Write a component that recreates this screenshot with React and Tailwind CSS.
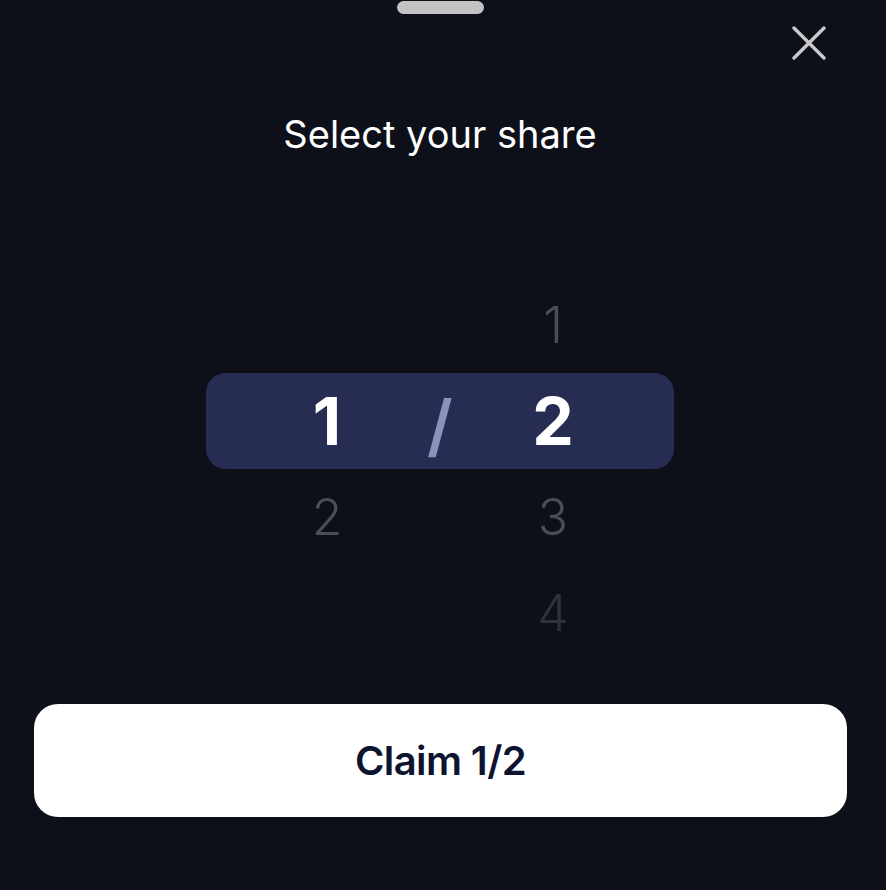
import { useState } from "react";

const font = { fontFamily: "Inter, 'Noto Sans', sans-serif" };

function PickerRow({ left, right, active, tone }) {
  const dim = tone === "faint" ? "text-[#2f323a]" : "text-[#4b4e57]";
  return (
    <div
      className={`h-[96px] w-[468px] mx-auto pl-[61px] grid grid-cols-[120px_102px_120px] gap-[2px] items-center ${
        active ? "bg-[#272d52] rounded-[20px]" : ""
      }`}
    >
      <div
        className={`text-center leading-none ${
          active ? "text-white text-[66px] font-bold" : `${dim} text-[50px] font-light`
        }`}
      >
        {left}
      </div>
      <div className="text-center leading-none text-[#8a91bb] text-[68px] font-semibold mt-[8px]">
        {active ? "/" : ""}
      </div>
      <div
        className={`text-center leading-none ${
          active ? "text-white text-[66px] font-bold" : `${dim} text-[50px] font-light`
        }`}
      >
        {right}
      </div>
    </div>
  );
}

export default function App() {
  const [share] = useState({ part: 1, total: 2 });

  return (
    <div style={font} className="w-full h-[890px] bg-[#0d1018] flex flex-col overflow-hidden pr-[6px]">
      <div className="mt-[1px] mx-auto w-[87px] h-[13px] rounded-full bg-[#c3c3c3]" />

      <div className="mt-[12px] h-[34px] flex justify-end pr-[54px]">
        <button type="button" className="w-[34px] h-[34px]">
          <svg viewBox="0 0 34 34" width="34" height="34">
            <path
              d="M2 2 L32 32 M32 2 L2 32"
              stroke="#c9c9cc"
              strokeWidth="3.4"
              strokeLinecap="round"
            />
          </svg>
        </button>
      </div>

      <h2 className="mt-[50px] h-[48px] leading-[48px] text-center text-white text-[38px] font-normal tracking-[0px]">
        Select your share
      </h2>

      <div className="mt-[119px]">
        <PickerRow left="" right="1" />
        <PickerRow left={share.part} right={share.total} active />
        <PickerRow left="2" right="3" />
        <PickerRow left="" right="4" tone="faint" />
      </div>

      <button
        type="button"
        className="mt-[43px] ml-[34px] mr-[33px] h-[113px] rounded-[24px] bg-white text-[#0e1430] text-[40px] font-semibold tracking-[-0.6px]"
      >
        Claim {share.part}/{share.total}
      </button>
    </div>
  );
}
